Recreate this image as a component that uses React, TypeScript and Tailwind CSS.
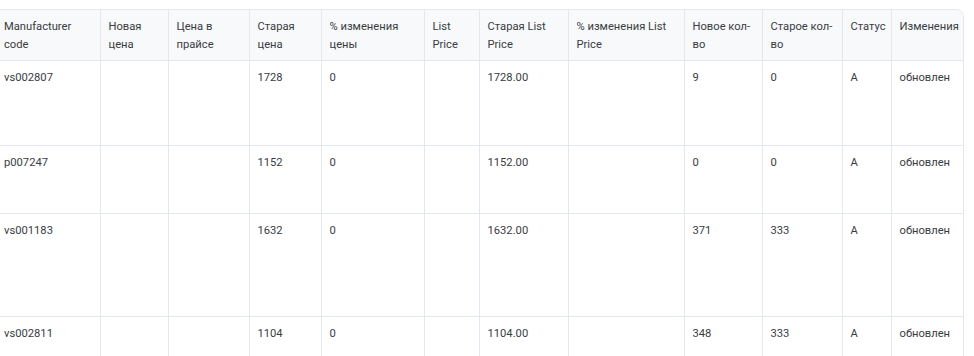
import React from 'react';

type Row = {
  code: string;
  oldPrice: string;
  pct: string;
  oldList: string;
  newQty: string;
  oldQty: string;
  status: string;
  change: string;
  h: string;
};

const columns = [
  { title: 'Manufacturer code', w: 'w-[100px]' },
  { title: 'Новая цена', w: 'w-[68px]' },
  { title: 'Цена в прайсе', w: 'w-[81px]' },
  { title: 'Старая цена', w: 'w-[72px]' },
  { title: '% изменения цены', w: 'w-[103px]' },
  { title: 'List Price', w: 'w-[55px]' },
  { title: 'Старая List Price', w: 'w-[89px]' },
  { title: '% изменения List Price', w: 'w-[116px]' },
  { title: 'Новое кол-во', w: 'w-[78px]' },
  { title: 'Старое кол-во', w: 'w-[80px]' },
  { title: 'Статус', w: 'w-[49px]' },
  { title: 'Изменения', w: 'w-[73px]' },
];

const rows: Row[] = [
  { code: 'vs002807', oldPrice: '1728', pct: '0', oldList: '1728.00', newQty: '9', oldQty: '0', status: 'A', change: 'обновлен', h: 'h-[85px]' },
  { code: 'p007247', oldPrice: '1152', pct: '0', oldList: '1152.00', newQty: '0', oldQty: '0', status: 'A', change: 'обновлен', h: 'h-[68px]' },
  { code: 'vs001183', oldPrice: '1632', pct: '0', oldList: '1632.00', newQty: '371', oldQty: '333', status: 'A', change: 'обновлен', h: 'h-[103px]' },
  { code: 'vs002811', oldPrice: '1104', pct: '0', oldList: '1104.00', newQty: '348', oldQty: '333', status: 'A', change: 'обновлен', h: 'h-[60px]' },
];

export default function App() {
  return (
    <div className="w-[974px] h-[356px] overflow-hidden bg-white pt-[9px] font-['Roboto','Noto_Sans',sans-serif] text-[11.2px] leading-[18px] text-[#383c42]">
      <div className="w-[964px] border-t border-r border-[#e3e8f0] rounded-tr-lg overflow-hidden">
        <table className="table-fixed w-[964px] border-collapse">
          <thead>
            <tr className="bg-[#f8f9fb] h-[50px]">
              {columns.map((c, i) => (
                <th
                  key={c.title}
                  className={`${c.w} align-top text-left font-normal pt-2 pb-[6px] ${i === 0 ? 'pl-1 pr-2' : 'px-2'} border-b border-[#e3e8f0] ${i < columns.length - 1 ? 'border-r' : ''}`}
                >
                  {c.title}
                </th>
              ))}
            </tr>
          </thead>
          <tbody>
            {rows.map((r) => {
              const cells = [r.code, '', '', r.oldPrice, r.pct, '', r.oldList, '', r.newQty, r.oldQty, r.status, r.change];
              return (
                <tr key={r.code} className={r.h}>
                  {cells.map((v, i) => (
                    <td
                      key={i}
                      className={`align-top pt-2 ${i === 0 ? 'pl-1 pr-2' : 'px-2'} border-b border-[#e3e8f0] ${i < cells.length - 1 ? 'border-r' : ''}`}
                    >
                      {v}
                    </td>
                  ))}
                </tr>
              );
            })}
          </tbody>
        </table>
      </div>
    </div>
  );
}
